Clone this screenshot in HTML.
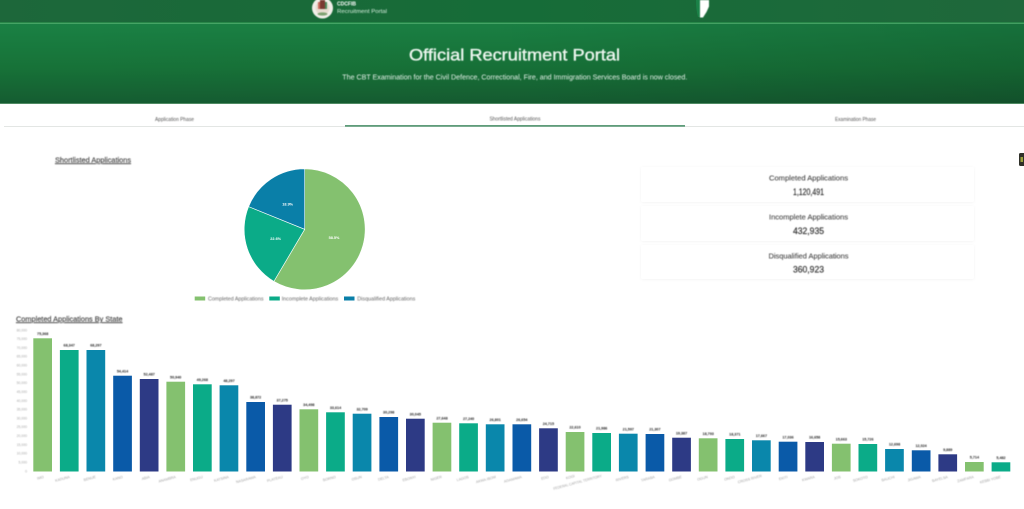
<!DOCTYPE html>
<html lang="en">
<head>
<meta charset="utf-8">
<title>Official Recruitment Portal</title>
<style>
html,body{margin:0;padding:0;background:#fff;width:1024px;height:509px;overflow:hidden}
svg{display:block}
text{font-family:"Liberation Sans",sans-serif}
.soft{filter:blur(.4px)}
.val{font-size:3.7px;font-weight:bold;fill:#222;text-anchor:middle}
.st{font-size:3.6px;fill:#a2a2a2;text-anchor:end}
.ax{font-size:3.4px;fill:#aaa;text-anchor:end}
.pl{font-size:3.8px;font-weight:bold;fill:#fff;text-anchor:middle}
.lg{font-size:5.6px;fill:#666}
.tab{font-size:5px;fill:#555;text-anchor:middle}
.ct{font-size:7.2px;fill:#444;text-anchor:middle;stroke:#444;stroke-width:.1px}
.cv{font-size:9px;fill:#333;text-anchor:middle;stroke:#333;stroke-width:.2px}
.sec{font-size:7.4px;fill:#444;stroke:#444;stroke-width:.15px;text-decoration:underline}
</style>
</head>
<body>
<svg width="1024" height="509" viewBox="0 0 1024 509" xmlns="http://www.w3.org/2000/svg">
<defs>
<linearGradient id="hero" x1="0" y1="0" x2="0" y2="1">
<stop offset="0" stop-color="#1a8144"/>
<stop offset=".55" stop-color="#177238"/>
<stop offset="1" stop-color="#155c31"/>
</linearGradient>
<linearGradient id="dark" x1="0" y1="0" x2="1" y2="0">
<stop offset="0" stop-color="#000" stop-opacity="0"/>
<stop offset=".5" stop-color="#000" stop-opacity=".02"/>
<stop offset="1" stop-color="#000" stop-opacity=".13"/>
</linearGradient>
<linearGradient id="nav" x1="0" y1="0" x2="1" y2="0">
<stop offset="0" stop-color="#1d673a"/>
<stop offset=".5" stop-color="#166c38"/>
<stop offset="1" stop-color="#1f683b"/>
</linearGradient>
<filter id="cardsh" x="-5%" y="-20%" width="110%" height="140%"><feDropShadow dx="0" dy="0.5" stdDeviation="1.2" flood-color="#000" flood-opacity=".05"/></filter>
</defs>
<rect width="1024" height="509" fill="#fff"/>

<!-- nav -->
<rect width="1024" height="23" fill="url(#nav)"/>
<rect y="22.5" width="1024" height="1.2" fill="#35a457"/>
<!-- hero -->
<rect y="23.7" width="1024" height="79.8" fill="url(#hero)"/>
<rect y="23.7" width="1024" height="79.8" fill="url(#dark)"/>
<rect y="103" width="1024" height="1" fill="#4f8a63"/>

<!-- logo -->
<g class="soft">
<circle cx="322.5" cy="8" r="10.5" fill="#f1efe9"/>
<circle cx="322.5" cy="8" r="7" fill="#e7dcd0"/>
<rect x="320" y="0" width="5" height="9" fill="#7a3a32"/>
<rect x="318" y="2" width="2" height="7" fill="#c96a5c"/>
<rect x="325" y="2" width="2" height="7" fill="#4c8a5c"/>
<ellipse cx="322.5" cy="14" rx="5" ry="1.6" fill="#7fa272"/>
<text x="337" y="5.6" font-size="5.6" font-weight="bold" fill="#fff" textLength="19" lengthAdjust="spacingAndGlyphs">CDCFIB</text>
<text x="337" y="13" font-size="5.6" fill="#d8efdf" textLength="50" lengthAdjust="spacingAndGlyphs">Recruitment Portal</text>
</g>

<!-- flag -->
<path d="M696 0H700V17H698Q696 10 696 0Z" fill="#1b8248"/>
<path d="M700 0H709V6.500L706.500 12L703 17.500H700Z" fill="#fff" class="soft"/>

<!-- hero text -->
<g class="soft">
<text x="514.500" y="60.700" font-size="17" fill="#eff8f1" stroke="#eff8f1" stroke-width=".35" text-anchor="middle" textLength="211" lengthAdjust="spacingAndGlyphs">Official Recruitment Portal</text>
<text x="514.800" y="79.500" font-size="7" fill="#e6f3ea" text-anchor="middle" textLength="345" lengthAdjust="spacingAndGlyphs">The CBT Examination for the Civil Defence, Correctional, Fire, and Immigration Services Board is now closed.</text>
</g>

<!-- tabs -->
<rect x="4" y="126" width="1020" height="0.8" fill="#dcdfdd"/>
<rect x="345" y="125" width="340" height="1.8" fill="#5f9c7a"/>
<g class="soft">
<text class="tab" x="174.500" y="120.800" textLength="39" lengthAdjust="spacingAndGlyphs">Application Phase</text>
<text class="tab" x="515" y="120.300" textLength="51" lengthAdjust="spacingAndGlyphs">Shortlisted Applications</text>
<text class="tab" x="855.500" y="120.800" textLength="41" lengthAdjust="spacingAndGlyphs">Examination Phase</text>
<text class="sec" x="55" y="162.300" textLength="76" lengthAdjust="spacingAndGlyphs">Shortlisted Applications</text>
<text class="sec" x="16" y="321.300" textLength="106.500" lengthAdjust="spacingAndGlyphs">Completed Applications By State</text>
</g>

<!-- side widget -->
<rect x="1019" y="153" width="6" height="13" rx="1.500" fill="#2f3029"/>
<rect x="1020.500" y="157" width="2.500" height="5" fill="#9aa13c"/>

<!-- pie -->
<g stroke="#fff" stroke-width=".6">
<path d="M304.700 229.300V168.800A60.500 60.500 0 1 1 273.900 281.400Z" fill="#84c16f"/>
<path d="M304.700 229.300L273.900 281.400A60.500 60.500 0 0 1 248.600 206.600Z" fill="#0bab88"/>
<path d="M304.700 229.300L248.600 206.600A60.500 60.500 0 0 1 304.700 168.800Z" fill="#0a7fa8"/>
</g>
<text class="pl" x="334" y="239">58.5%</text>
<text class="pl" x="275.700" y="240">22.6%</text>
<text class="pl" x="287.700" y="205.500">18.9%</text>

<!-- legend -->
<rect x="194.700" y="296.500" width="10.500" height="4" fill="#84c16f"/>
<rect x="269.300" y="296.500" width="10.500" height="4" fill="#0bab88"/>
<rect x="344" y="296.500" width="10.500" height="4" fill="#0a7fa8"/>
<g class="soft">
<text class="lg" x="208" y="300.500" textLength="55.500" lengthAdjust="spacingAndGlyphs">Completed Applications</text>
<text class="lg" x="281.700" y="300.500" textLength="56.500" lengthAdjust="spacingAndGlyphs">Incomplete Applications</text>
<text class="lg" x="357.300" y="300.500" textLength="58" lengthAdjust="spacingAndGlyphs">Disqualified Applications</text>
</g>

<!-- cards -->
<g fill="#fff" filter="url(#cardsh)">
<rect x="641" y="167" width="333" height="35" rx="2"/>
<rect x="641" y="206" width="333" height="35" rx="2"/>
<rect x="641" y="245" width="333" height="34" rx="2"/>
</g>
<g class="soft">
<text class="ct" x="808.500" y="180.600" textLength="79" lengthAdjust="spacingAndGlyphs">Completed Applications</text>
<text class="cv" x="808.500" y="194.800" textLength="31" lengthAdjust="spacingAndGlyphs">1,120,491</text>
<text class="ct" x="808.500" y="219.500" textLength="79" lengthAdjust="spacingAndGlyphs">Incomplete Applications</text>
<text class="cv" x="808.500" y="234" textLength="31" lengthAdjust="spacingAndGlyphs">432,935</text>
<text class="ct" x="808.500" y="258.500" textLength="80" lengthAdjust="spacingAndGlyphs">Disqualified Applications</text>
<text class="cv" x="808.500" y="272.500" textLength="31" lengthAdjust="spacingAndGlyphs">360,923</text>
</g>

<!-- y axis -->
<g class="soft">
<text class="ax" x="27" y="331.300">80,000</text>
<text class="ax" x="27" y="340.100">75,000</text>
<text class="ax" x="27" y="348.900">70,000</text>
<text class="ax" x="27" y="357.700">65,000</text>
<text class="ax" x="27" y="366.500">60,000</text>
<text class="ax" x="27" y="375.300">55,000</text>
<text class="ax" x="27" y="384.200">50,000</text>
<text class="ax" x="27" y="393">45,000</text>
<text class="ax" x="27" y="401.800">40,000</text>
<text class="ax" x="27" y="410.600">35,000</text>
<text class="ax" x="27" y="419.400">30,000</text>
<text class="ax" x="27" y="428.200">25,000</text>
<text class="ax" x="27" y="437">20,000</text>
<text class="ax" x="27" y="445.900">15,000</text>
<text class="ax" x="27" y="454.700">10,000</text>
<text class="ax" x="27" y="463.500">5,000</text>
<text class="ax" x="27" y="472.500">0</text>
</g>

<!-- bars -->
<g>
<rect x="33.300" y="338.300" width="18.700" height="133.200" fill="#84c16f"/>
<rect x="59.900" y="350" width="18.700" height="121.500" fill="#0bab88"/>
<rect x="86.500" y="350" width="18.700" height="121.500" fill="#0a87ab"/>
<rect x="113.200" y="375.700" width="18.700" height="95.800" fill="#0a5aa8"/>
<rect x="139.800" y="379" width="18.700" height="92.500" fill="#2d3a85"/>
<rect x="166.400" y="381.700" width="18.700" height="89.800" fill="#84c16f"/>
<rect x="193" y="384.300" width="18.700" height="87.200" fill="#0bab88"/>
<rect x="219.600" y="385.300" width="18.700" height="86.200" fill="#0a87ab"/>
<rect x="246.300" y="402" width="18.700" height="69.500" fill="#0a5aa8"/>
<rect x="272.900" y="404.700" width="18.700" height="66.800" fill="#2d3a85"/>
<rect x="299.500" y="409.300" width="18.700" height="62.200" fill="#84c16f"/>
<rect x="326.100" y="412.300" width="18.700" height="59.200" fill="#0bab88"/>
<rect x="352.700" y="413.700" width="18.700" height="57.800" fill="#0a87ab"/>
<rect x="379.400" y="417" width="18.700" height="54.500" fill="#0a5aa8"/>
<rect x="406" y="418.700" width="18.700" height="52.800" fill="#2d3a85"/>
<rect x="432.600" y="422.700" width="18.700" height="48.800" fill="#84c16f"/>
<rect x="459.200" y="423.300" width="18.700" height="48.200" fill="#0bab88"/>
<rect x="485.800" y="424.300" width="18.700" height="47.200" fill="#0a87ab"/>
<rect x="512.500" y="424.300" width="18.700" height="47.200" fill="#0a5aa8"/>
<rect x="539.100" y="428.300" width="18.700" height="43.200" fill="#2d3a85"/>
<rect x="565.700" y="432" width="18.700" height="39.500" fill="#84c16f"/>
<rect x="592.300" y="433" width="18.700" height="38.500" fill="#0bab88"/>
<rect x="618.900" y="433.700" width="18.700" height="37.800" fill="#0a87ab"/>
<rect x="645.600" y="434" width="18.700" height="37.500" fill="#0a5aa8"/>
<rect x="672.200" y="437.700" width="18.700" height="33.800" fill="#2d3a85"/>
<rect x="698.800" y="438.300" width="18.700" height="33.200" fill="#84c16f"/>
<rect x="725.400" y="439" width="18.700" height="32.500" fill="#0bab88"/>
<rect x="752" y="440.300" width="18.700" height="31.200" fill="#0a87ab"/>
<rect x="778.700" y="441.700" width="18.700" height="29.800" fill="#0a5aa8"/>
<rect x="805.300" y="442" width="18.700" height="29.500" fill="#2d3a85"/>
<rect x="831.900" y="443.700" width="18.700" height="27.800" fill="#84c16f"/>
<rect x="858.500" y="444" width="18.700" height="27.500" fill="#0bab88"/>
<rect x="885.100" y="449" width="18.700" height="22.500" fill="#0a87ab"/>
<rect x="911.800" y="450.300" width="18.700" height="21.200" fill="#0a5aa8"/>
<rect x="938.400" y="454.300" width="18.700" height="17.200" fill="#2d3a85"/>
<rect x="965" y="462" width="18.700" height="9.500" fill="#84c16f"/>
<rect x="991.600" y="462.300" width="18.700" height="9.200" fill="#0bab88"/>
</g>

<!-- values -->
<g class="soft">
<text class="val" x="42.700" y="335">75,368</text>
<text class="val" x="69.200" y="346.700">68,347</text>
<text class="val" x="95.900" y="346.700">68,297</text>
<text class="val" x="122.500" y="372.400">54,414</text>
<text class="val" x="149.200" y="375.700">52,487</text>
<text class="val" x="175.700" y="378.400">50,940</text>
<text class="val" x="202.300" y="381">49,268</text>
<text class="val" x="229" y="382">48,297</text>
<text class="val" x="255.600" y="398.700">38,872</text>
<text class="val" x="282.200" y="401.400">37,275</text>
<text class="val" x="308.800" y="406">34,498</text>
<text class="val" x="335.500" y="409">33,614</text>
<text class="val" x="362.100" y="410.400">32,709</text>
<text class="val" x="388.700" y="413.700">30,298</text>
<text class="val" x="415.300" y="415.400">30,045</text>
<text class="val" x="442" y="419.400">27,648</text>
<text class="val" x="468.600" y="420">27,240</text>
<text class="val" x="495.200" y="421">26,801</text>
<text class="val" x="521.800" y="421">26,654</text>
<text class="val" x="548.400" y="425">24,715</text>
<text class="val" x="575" y="428.700">22,610</text>
<text class="val" x="601.700" y="429.700">21,986</text>
<text class="val" x="628.300" y="430.400">21,597</text>
<text class="val" x="654.900" y="430.700">21,307</text>
<text class="val" x="681.500" y="434.400">19,387</text>
<text class="val" x="708.200" y="435">18,793</text>
<text class="val" x="734.800" y="435.700">18,371</text>
<text class="val" x="761.400" y="437">17,667</text>
<text class="val" x="788" y="438.400">17,036</text>
<text class="val" x="814.600" y="438.700">16,658</text>
<text class="val" x="841.300" y="440.400">15,663</text>
<text class="val" x="867.900" y="440.700">15,726</text>
<text class="val" x="894.500" y="445.700">12,698</text>
<text class="val" x="921.100" y="447">12,024</text>
<text class="val" x="947.700" y="451">9,889</text>
<text class="val" x="974.400" y="458.700">5,714</text>
<text class="val" x="1001" y="459">5,482</text>
</g>

<!-- state labels -->
<g class="soft">
<text class="st" transform="translate(44,478) rotate(-15)">IMO</text>
<text class="st" transform="translate(70,478) rotate(-15)">KADUNA</text>
<text class="st" transform="translate(96,478) rotate(-15)">BENUE</text>
<text class="st" transform="translate(123,478) rotate(-15)">KANO</text>
<text class="st" transform="translate(150,478) rotate(-15)">ABIA</text>
<text class="st" transform="translate(176,478) rotate(-15)">ANAMBRA</text>
<text class="st" transform="translate(203,478) rotate(-15)">ENUGU</text>
<text class="st" transform="translate(229,478) rotate(-15)">KATSINA</text>
<text class="st" transform="translate(256,478) rotate(-15)">NASARAWA</text>
<text class="st" transform="translate(283,478) rotate(-15)">PLATEAU</text>
<text class="st" transform="translate(309,478) rotate(-15)">OYO</text>
<text class="st" transform="translate(336,478) rotate(-15)">BORNO</text>
<text class="st" transform="translate(362,478) rotate(-15)">OSUN</text>
<text class="st" transform="translate(389,478) rotate(-15)">DELTA</text>
<text class="st" transform="translate(416,478) rotate(-15)">EBONYI</text>
<text class="st" transform="translate(442,478) rotate(-15)">NIGER</text>
<text class="st" transform="translate(469,478) rotate(-15)">LAGOS</text>
<text class="st" transform="translate(496,478) rotate(-15)">AKWA IBOM</text>
<text class="st" transform="translate(522,478) rotate(-15)">ADAMAWA</text>
<text class="st" transform="translate(549,478) rotate(-15)">EDO</text>
<text class="st" transform="translate(575,477) rotate(-15)">KOGI</text>
<text class="st" transform="translate(602,477) rotate(-15)" textLength="50" lengthAdjust="spacingAndGlyphs">FEDERAL CAPITAL TERRITORY</text>
<text class="st" transform="translate(629,478) rotate(-15)">RIVERS</text>
<text class="st" transform="translate(655,478) rotate(-15)">TARABA</text>
<text class="st" transform="translate(682,478) rotate(-15)">GOMBE</text>
<text class="st" transform="translate(708,478) rotate(-15)">OGUN</text>
<text class="st" transform="translate(735,478) rotate(-15)">ONDO</text>
<text class="st" transform="translate(762,477) rotate(-15)">CROSS RIVER</text>
<text class="st" transform="translate(788,478) rotate(-15)">EKITI</text>
<text class="st" transform="translate(815,478) rotate(-15)">KWARA</text>
<text class="st" transform="translate(841,478) rotate(-15)">JOS</text>
<text class="st" transform="translate(868,478) rotate(-15)">SOKOTO</text>
<text class="st" transform="translate(895,478) rotate(-15)">BAUCHI</text>
<text class="st" transform="translate(921,478) rotate(-15)">JIGAWA</text>
<text class="st" transform="translate(948,478) rotate(-15)">BAYELSA</text>
<text class="st" transform="translate(974,478) rotate(-15)">ZAMFARA</text>
<text class="st" transform="translate(1001,478) rotate(-15)">KEBBI YOBE</text>
</g>
</svg>
</body>
</html>
